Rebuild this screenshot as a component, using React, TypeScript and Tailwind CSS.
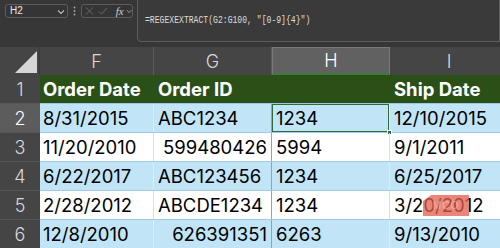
import React from "react";

type Row = { n: number; f: string; g: string; gRight?: boolean; h: string; i: string; blue: boolean };

const rows: Row[] = [
  { n: 2, f: "8/31/2015", g: "ABC1234", h: "1234", i: "12/10/2015", blue: true },
  { n: 3, f: "11/20/2010", g: "599480426", gRight: true, h: "5994", i: "9/1/2011", blue: false },
  { n: 4, f: "6/22/2017", g: "ABC123456", h: "1234", i: "6/25/2017", blue: true },
  { n: 5, f: "2/28/2012", g: "ABCDE1234", h: "1234", i: "3/20/2012", blue: false },
  { n: 6, f: "12/8/2010", g: "626391351", gRight: true, h: "6263", i: "9/13/2010", blue: true },
];

const font = { fontFamily: "Inter, 'Noto Sans', sans-serif" };

export default function App() {
  return (
    <div className="relative w-[500px] h-[248px] overflow-hidden bg-[#373737]" style={font}>
      {/* Formula bar */}
      <div className="flex h-[47px] items-start">
        <div className="flex items-center pl-[5px] pt-[4px] gap-[5px]">
          <div className="flex items-center justify-between w-[63px] h-[14px] rounded-[3px] border border-[#5d5d5d] bg-[#353535] pl-[4px] pr-[2px]">
            <span className="text-[10px] leading-none text-[#e8e8e8]" style={{ fontFamily: "'Liberation Sans', sans-serif" }}>H2</span>
            <svg width="8" height="6" viewBox="0 0 8 6" className="mt-[1px]">
              <path d="M1 1.5 L4 4.5 L7 1.5" stroke="#bdbdbd" strokeWidth="1.1" fill="none" />
            </svg>
          </div>
          <svg width="3" height="10" viewBox="0 0 3 10">
            <circle cx="1.5" cy="1.5" r="0.9" fill="#a8a8a8" />
            <circle cx="1.5" cy="5" r="0.9" fill="#a8a8a8" />
            <circle cx="1.5" cy="8.5" r="0.9" fill="#a8a8a8" />
          </svg>
          <div className="flex items-center w-[52px] h-[14px] rounded-[3px] border border-[#5d5d5d] bg-[#353535] pl-[3px] gap-[4px]">
            <svg width="10" height="10" viewBox="0 0 10 10">
              <path d="M1 1 L9 9 M9 1 L1 9" stroke="#6e6e6e" strokeWidth="1" fill="none" />
            </svg>
            <svg width="11" height="10" viewBox="0 0 11 10">
              <path d="M1 5.5 L4 8.5 L10 1.5" stroke="#6e6e6e" strokeWidth="1" fill="none" />
            </svg>
            <span className="ml-[4px] text-[11px] leading-none italic text-[#cfcfcf]" style={{ fontFamily: "'Liberation Serif', serif" }}>fx</span>
            <svg width="7" height="5" viewBox="0 0 7 5" className="-ml-[2px]">
              <path d="M1 1 L3.5 3.8 L6 1" stroke="#a8a8a8" strokeWidth="1" fill="none" />
            </svg>
          </div>
        </div>
        <div className="ml-[4px] flex-1 h-[43px] -mt-[1px] rounded-bl-[4px] border border-[#5d5d5d] bg-[#3a3a3a] pl-[7px] pt-[5px]">
          <span
            className="inline-block origin-left scale-x-[0.81] text-[10px] leading-none text-[#dcdcdc] whitespace-nowrap"
            style={{ fontFamily: "'Liberation Mono', monospace" }}
          >
            =REGEXEXTRACT(G2:G100, "[0-9]{"{"}4{"}"}")
          </span>
        </div>
      </div>

      {/* Column headers */}
      <div className="flex h-[28px] bg-[#454545]">
        <div className="relative w-[40px] shrink-0 border-r border-[#3a3a3a]">
          <svg width="40" height="28" viewBox="0 0 40 28" className="absolute left-0 top-0">
            <path d="M15 26 L37 4 L37 26 Z" fill="#d6d6d6" />
          </svg>
        </div>
        <div className="w-[114px] shrink-0 flex items-center justify-center border-r border-[#5a5a5a] text-[18px] text-[#dadada] font-light">F</div>
        <div className="w-[118px] shrink-0 flex items-center justify-center border-r border-[#5a5a5a] text-[18px] text-[#dadada] font-light">G</div>
        <div className="w-[118px] shrink-0 flex items-center justify-center bg-[#616161] border-x border-t border-[#7a7a7a] border-b-2 border-b-[#3d7a3d] text-[18px] text-white font-light">H</div>
        <div className="w-[118px] shrink-0 flex items-center justify-center text-[18px] text-[#dadada] font-light">I</div>
      </div>

      {/* Row 1 header row */}
      <div className="flex h-[29px]">
        <div className="w-[40px] shrink-0 flex items-center justify-center bg-[#454545] border-b border-[#555] text-[18px] text-[#dadada] font-light">1</div>
        <div className="flex flex-1 bg-[#2a4f17] border-b border-[#9cc7e3] text-[18.5px] font-bold text-white">
          <div className="w-[114px] shrink-0 flex items-center pl-[3px] pt-[1px]">Order Date</div>
          <div className="w-[118px] shrink-0 flex items-center pl-[4px] pt-[1px]">Order ID</div>
          <div className="w-[118px] shrink-0 flex items-center pl-[4px] pt-[1px]"></div>
          <div className="w-[118px] shrink-0 flex items-center pl-[4px] pt-[1px]">Ship Date</div>
        </div>
      </div>

      {rows.map((r) => {
        const bg = r.blue ? "bg-[#c1e4f6]" : "bg-white";
        const vline = r.blue ? "border-[#d9eef9]" : "border-[#dedede]";
        return (
          <div key={r.n} className="flex h-[29px]">
            <div
              className={`w-[40px] shrink-0 flex items-center justify-center border-b border-[#555] text-[18px] font-light ${
                r.n === 2 ? "bg-[#5c5c5c] text-white" : "bg-[#454545] text-[#dadada]"
              }`}
            >
              {r.n}
            </div>
            <div className={`flex flex-1 ${bg} border-b border-[#9fcbe8] text-[18.5px] text-black`}>
              <div className={`w-[114px] shrink-0 flex items-center pl-[3px] pt-[1px] border-r ${vline} whitespace-nowrap`}>{r.f}</div>
              <div
                className={`w-[118px] shrink-0 flex items-center pt-[1px] border-r border-[#8fa3b3] whitespace-nowrap ${
                  r.gRight ? "justify-end pr-[4px]" : "pl-[4px]"
                }`}
              >
                {r.g}
              </div>
              <div
                className={`relative w-[118px] shrink-0 flex items-center pl-[4px] pt-[1px] border-r ${vline} ${
                  r.n === 2 ? "shadow-[inset_0_0_0_1px_#2e6b3d]" : ""
                }`}
              >
                {r.h}
                {r.n === 2 && (
                  <div className="absolute -right-[3px] -bottom-[3px] w-[5px] h-[5px] bg-[#2e6b3d] border border-white" />
                )}
              </div>
              <div className="w-[118px] shrink-0 flex items-center pl-[4px] pt-[1px] whitespace-nowrap">{r.i}</div>
            </div>
          </div>
        );
      })}

      {/* watermark overlay */}
      <div className="absolute left-[423px] top-[195px] w-[46px] h-[21px] bg-[#e35d4c]/75 flex items-center justify-center [clip-path:polygon(18%_0,100%_0,100%_100%,0_100%,0_28%)]">
        <span className="text-[10px] leading-none text-white/40 tracking-[1px]" style={{ fontFamily: "'Liberation Sans', sans-serif" }}>MCO</span>
      </div>
    </div>
  );
}
